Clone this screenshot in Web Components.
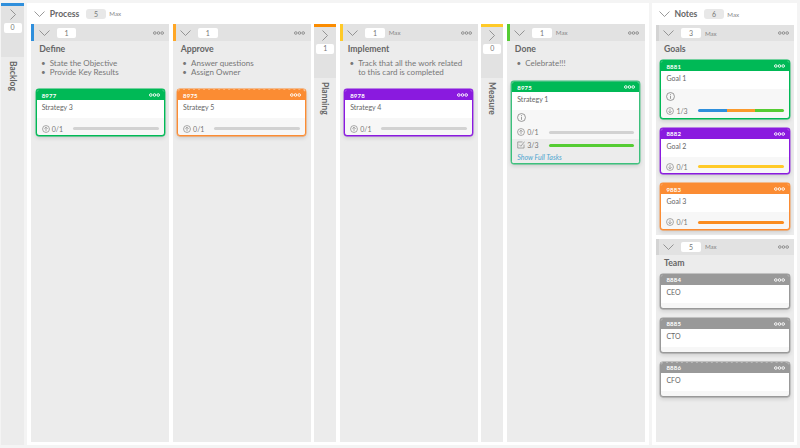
<!DOCTYPE html>
<html>
<head>
<meta charset="utf-8">
<title>Board</title>
<style>
  html, body {
    height: 100%;
    margin: 0;
    overflow: hidden;
  }

  body {
    background: #f4f4f4;
    box-sizing: border-box;
    color: #666;
    display: flex;
    font-family: Lato, 'Noto Sans', sans-serif;
    font-size: 8px;
    gap: 3px;
    padding: 3px 3px 3px 1px;
  }

  k-panel.process { flex: 0 0 621.7px; }
  k-panel.notes { flex: 1 1 0; --lane-head: 16px; --meter-gap: 3.5px; --tight-height: 13.7px; }
  k-lane.grow { flex: 1 1 0; }
</style>
</head>
<body>
<k-collapsed name="Backlog" count="0" color="#2f8fdc" style="flex-basis: 23px"></k-collapsed>

<k-panel class="process" name="Process" count="5">
  <k-lane name="Define" count="1" color="#2f8fdc" pad="34" max="">
    <ul slot="notes"><li>State the Objective</li><li>Provide Key Results</li></ul>
    <k-card code="8977" name="Strategy 3" color="#00b956">
      <k-meter kind="up" value="0/1"></k-meter>
    </k-card>
  </k-lane>
  <k-lane name="Approve" count="1" color="#ffa726" pad="34" max="">
    <ul slot="notes"><li>Answer questions</li><li>Assign Owner</li></ul>
    <k-card code="8975" name="Strategy 5" color="#fb8c33" dashed>
      <k-meter kind="up" value="0/1"></k-meter>
    </k-card>
  </k-lane>
  <k-collapsed name="Planning" count="1" color="#fb8c00"></k-collapsed>
  <k-lane name="Implement" count="1" color="#ffca28" pad="34">
    <ul slot="notes"><li>Track that all the work related to this card is completed</li></ul>
    <k-card code="8978" name="Strategy 4" color="#8a1adf">
      <k-meter kind="up" value="0/1"></k-meter>
    </k-card>
  </k-lane>
  <k-collapsed name="Measure" count="0" color="#ffca28"></k-collapsed>
  <k-lane name="Done" count="1" color="#55cc33" pad="26">
    <ul slot="notes"><li>Celebrate!!!</li></ul>
    <k-card code="8975" name="Strategy 1" color="#00b956" soft>
      <k-info></k-info>
      <k-meter kind="up" value="0/1" tight></k-meter>
      <k-meter kind="check" value="3/3" band fill="#55cc33"></k-meter>
      <k-link>Show Full Tasks</k-link>
    </k-card>
  </k-lane>
</k-panel>

<k-panel class="notes" name="Notes" count="6" stack>
  <k-lane name="Goals" count="3" color="#d4d4d4" pad="5" fit>
    <k-card code="8881" name="Goal 1" color="#00b956">
      <k-info></k-info>
      <k-meter kind="down" value="1/3" tight fill="linear-gradient(90deg, #2f8fdc 0 33.3%, #fb9a2c 33.3% 66.6%, #55cc33 66.6%)"></k-meter>
    </k-card>
    <k-card code="8882" name="Goal 2" color="#8a1adf">
      <k-meter kind="down" value="0/1" fill="#ffca28"></k-meter>
    </k-card>
    <k-card code="9883" name="Goal 3" color="#fb8c33">
      <k-meter kind="down" value="0/1" fill="#fb8c1e"></k-meter>
    </k-card>
  </k-lane>
  <k-lane class="grow" name="Team" count="5" color="#d4d4d4" pad="5">
    <k-card code="8884" name="CEO" color="#999"></k-card>
    <k-card code="8885" name="CTO" color="#999"></k-card>
    <k-card code="8886" name="CFO" color="#999" dashed></k-card>
  </k-lane>
</k-panel>

<script>
// Small drawn pieces shared by the elements
const CHEVRON_DOWN = `<svg width="11" height="6" viewBox="0 0 11 6" fill="none" stroke="#808080" stroke-width=".8"><path d="M.5 .5l5 5 5-5"/></svg>`;
const CHEVRON_RIGHT = `<svg width="6" height="11" viewBox="0 0 6 11" fill="none" stroke="#808080" stroke-width=".8"><path d="M.5 .5l5 5-5 5"/></svg>`;
const ICONS = {
  up: `<circle cx="5" cy="5" r="4.3"/><path d="M5 7.6V2.8M2.9 4.8L5 2.7l2.1 2.1"/>`,
  down: `<circle cx="5" cy="5" r="4.3"/><path d="M5 2.4v4.8M2.9 5.2L5 7.3l2.1-2.1"/>`,
  check: `<path d="M8.8 4.5v4.3H.9V1.2h6"/><path d="M2.8 4.6l2 2L9.4.8"/>`
};

const dots = color => `<svg width="11" height="4" viewBox="0 0 11 4" fill="none" stroke="${color}" stroke-width=".9"><circle cx="1.8" cy="2" r="1.3"/><circle cx="5.5" cy="2" r="1.3"/><circle cx="9.2" cy="2" r="1.3"/></svg>`;

class KPanel extends HTMLElement {
  constructor() {
    super();

    const shadow = this.attachShadow( {mode: 'open'} );
    shadow.innerHTML = /* template */ `
      <style>
        :host {
          background: #fff;
          box-sizing: border-box;
          display: flex;
          flex-direction: column;
          padding: 0 3px 3px 4.3px;
        }

        header {
          align-items: center;
          display: flex;
          flex: 0 0 21px;
          padding-left: 3px;
        }

        :host( [stack] ) header {
          flex-basis: 22px;
        }

        h2 {
          color: #666;
          font-size: 8.6px;
          font-weight: 700;
          margin: 0 0 0 4.5px;
        }

        b {
          background: #e8e8e8;
          border-radius: 3px;
          color: #777;
          font-size: 7px;
          font-weight: 400;
          height: 10px;
          line-height: 10px;
          margin-left: 7px;
          text-align: center;
          width: 19.5px;
        }

        i {
          color: #888;
          font-size: 6.2px;
          font-style: normal;
          margin-left: 3.5px;
        }

        .lanes {
          display: flex;
          flex: 1;
          gap: 3.4px;
          min-height: 0;
        }

        :host( [stack] ) .lanes {
          flex-direction: column;
          gap: 4px;
        }
      </style>
      <header>
        ${CHEVRON_DOWN}
        <h2>${this.getAttribute( 'name' )}</h2>
        <b>${this.getAttribute( 'count' )}</b>
        <i>Max</i>
      </header>
      <div class="lanes"><slot></slot></div>
    `;
  }
}

class KLane extends HTMLElement {
  constructor() {
    super();

    const max = this.hasAttribute( 'max' ) ? '' : '<i>Max</i>';
    const shadow = this.attachShadow( {mode: 'open'} );
    shadow.innerHTML = /* template */ `
      <style>
        :host {
          background: #ececec;
          box-sizing: border-box;
          display: flex;
          flex: 0 0 138px;
          flex-direction: column;
          min-width: 0;
        }

        :host( [fit] ) {
          flex: 0 0 auto;
          padding-bottom: 5px;
        }

        header {
          align-items: center;
          background: #e2e2e2;
          border-left: 3px solid ${this.getAttribute( 'color' )};
          display: flex;
          flex: 0 0 var( --lane-head, 17px );
          padding: 0 5.5px 0 4.4px;
        }

        b {
          background: #fff;
          border-radius: 2px;
          color: #777;
          font-size: 7px;
          font-weight: 400;
          height: 10px;
          line-height: 10px;
          margin-left: 7px;
          text-align: center;
          width: 19.5px;
        }

        i {
          color: #888;
          font-size: 6.2px;
          font-style: normal;
          margin-left: 4px;
        }

        header svg:last-child {
          margin-left: auto;
        }

        h3 {
          color: #666;
          font-size: 8.7px;
          font-weight: 700;
          line-height: 12px;
          margin: 2px 0 0 8px;
        }

        .notes {
          box-sizing: border-box;
          height: var( --note-height );
        }

        ::slotted( ul ) {
          color: #777;
          font-size: 8px;
          line-height: 9px;
          list-style: '•  ';
          margin: 4px 8px 0 18.4px;
          padding: 0;
        }

        .cards {
          display: flex;
          flex-direction: column;
          gap: 9px;
          padding: 0 4.4px;
        }
      </style>
      <header>
        ${CHEVRON_DOWN}
        <b>${this.getAttribute( 'count' )}</b>
        ${max}
        ${dots( '#888' )}
      </header>
      <h3>${this.getAttribute( 'name' )}</h3>
      <div class="notes" style="--note-height: ${this.getAttribute( 'pad' )}px"><slot name="notes"></slot></div>
      <div class="cards"><slot></slot></div>
    `;
  }
}

class KCollapsed extends HTMLElement {
  constructor() {
    super();

    const shadow = this.attachShadow( {mode: 'open'} );
    shadow.innerHTML = /* template */ `
      <style>
        :host {
          background: #ececec;
          border-top: 3px solid ${this.getAttribute( 'color' )};
          box-sizing: border-box;
          display: flex;
          flex: 0 0 22.3px;
          flex-direction: column;
        }

        .head {
          align-items: center;
          background: #e2e2e2;
          box-sizing: border-box;
          display: flex;
          flex: 0 0 51px;
          flex-direction: column;
          padding-top: 3px;
        }

        b {
          background: #fff;
          border-radius: 2px;
          color: #777;
          font-size: 7px;
          font-weight: 400;
          height: 9.5px;
          line-height: 9.5px;
          margin-top: 3px;
          text-align: center;
          width: 18px;
        }

        span {
          color: #666;
          font-size: 8.5px;
          font-weight: 700;
          line-height: 22px;
          margin-top: 4px;
          writing-mode: vertical-rl;
        }
      </style>
      <div class="head">
        ${CHEVRON_RIGHT}
        <b>${this.getAttribute( 'count' )}</b>
      </div>
      <span>${this.getAttribute( 'name' )}</span>
    `;
  }
}

class KCard extends HTMLElement {
  constructor() {
    super();

    const head = this.getAttribute( 'color' );
    const color = this.hasAttribute( 'soft' ) ? '#3cc07c' : head;
    const shadow = this.attachShadow( {mode: 'open'} );
    shadow.innerHTML = /* template */ `
      <style>
        :host {
          background: #f7f7f7;
          border: 1px solid ${color};
          border-radius: 3px;
          box-shadow: 0 0 0 .4px ${color}, 0 2px 4px rgba( 0, 0, 0, .14 );
          box-sizing: border-box;
          display: block;
          overflow: hidden;
        }

        /* The gaps of the dashes show a tint of the head, not the card */
        :host( [dashed] ) {
          background: linear-gradient( color-mix( in srgb, ${head} 70%, #fff ) 0 1px, #f7f7f7 1px ) border-box;
          border-top-style: dashed;
        }

        header {
          align-items: center;
          background: ${head};
          color: #fff;
          display: flex;
          font-size: 6px;
          font-weight: 700;
          height: 10px;
          justify-content: space-between;
          letter-spacing: .2px;
          padding: 0 4px 0 5px;
        }

        .title {
          background: #fff;
          box-sizing: border-box;
          color: #666;
          font-size: 7px;
          height: 18px;
          line-height: 15px;
          padding-left: 5px;
        }

        .foot {
          min-height: 5px;
        }
      </style>
      <header><span>${this.getAttribute( 'code' )}</span>${dots( '#fff' )}</header>
      <div class="title">${this.getAttribute( 'name' )}</div>
      <div class="foot"><slot></slot></div>
    `;
  }
}

class KMeter extends HTMLElement {
  constructor() {
    super();

    const kind = this.getAttribute( 'kind' );
    const fill = this.getAttribute( 'fill' ) || '#d2d2d2';
    const shadow = this.attachShadow( {mode: 'open'} );
    shadow.innerHTML = /* template */ `
      <style>
        :host {
          align-items: center;
          display: flex;
          height: 13px;
          margin-top: var( --meter-gap, 4px );
          padding: 0 5px;
        }

        :host( [tight] ) {
          height: var( --tight-height, 14px );
          margin-top: 0;
        }

        :host( [band] ) {
          background: #ececec;
          height: 12px;
          margin-top: 0;
        }

        svg {
          flex: none;
        }

        span {
          color: #777;
          font-size: 7px;
          margin-left: 2px;
          width: 21.3px;
        }

        div {
          background: ${fill};
          border-radius: 2px;
          flex: 1;
          height: 3px;
        }
      </style>
      <svg width="8" height="8" viewBox="0 0 10 10" fill="none" stroke="#888" stroke-width=".9">${ICONS[kind]}</svg>
      <span>${this.getAttribute( 'value' )}</span>
      <div></div>
    `;
  }
}

class KInfo extends HTMLElement {
  constructor() {
    super();

    const shadow = this.attachShadow( {mode: 'open'} );
    shadow.innerHTML = /* template */ `
      <style>
        :host {
          box-sizing: border-box;
          display: block;
          height: 15px;
          padding: 3px 0 0 5px;
        }
      </style>
      <svg width="9" height="9" viewBox="0 0 10 10" fill="none" stroke="#777" stroke-width=".8"><circle cx="5" cy="5" r="4.4"/><path d="M5 4.2v3.4M5 2.2v1"/></svg>
    `;
  }
}

class KLink extends HTMLElement {
  constructor() {
    super();

    const shadow = this.attachShadow( {mode: 'open'} );
    shadow.innerHTML = /* template */ `
      <style>
        :host {
          background: #ececec;
          color: #4ea5d0;
          display: block;
          font-size: 7px;
          font-style: italic;
          height: 12px;
          line-height: 12px;
          padding-left: 5px;
        }
      </style>
      <slot></slot>
    `;
  }
}

customElements.define( 'k-panel', KPanel );
customElements.define( 'k-lane', KLane );
customElements.define( 'k-collapsed', KCollapsed );
customElements.define( 'k-card', KCard );
customElements.define( 'k-meter', KMeter );
customElements.define( 'k-info', KInfo );
customElements.define( 'k-link', KLink );
</script>
</body>
</html>
